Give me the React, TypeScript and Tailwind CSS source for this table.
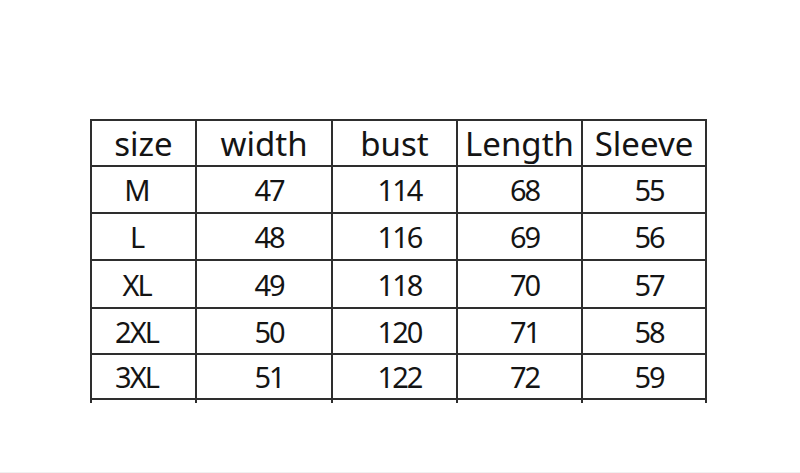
const headers = ['size', 'width', 'bust', 'Length', 'Sleeve'];

const rows = [
  ['M', '47', '114', '68', '55'],
  ['L', '48', '116', '69', '56'],
  ['XL', '49', '118', '70', '57'],
  ['2XL', '50', '120', '71', '58'],
  ['3XL', '51', '122', '72', '59'],
];

const rowHeights = ['h-[45px]', 'h-[45px]', 'h-[46px]', 'h-[44px]', 'h-[43px]'];

export default function App() {
  return (
    <div className="w-[800px] h-[473px] bg-white border-b border-[#f0f0f0] pt-[119px] pl-[90px] font-['Noto_Sans',sans-serif] text-[#141414]">
      <div className="inline-grid grid-cols-[103px_134px_123px_123px_122px] gap-[2px] bg-[#2e2e2e] p-[2px] pb-0">
        {headers.map((h) => (
          <div key={h} className="h-[44px] bg-white flex items-center justify-center text-[33px] leading-none">
            {h}
          </div>
        ))}
        {rows.map((r, i) =>
          r.map((v, j) => (
            <div
              key={`${i}-${j}`}
              className={`${rowHeights[i]} bg-white flex items-center justify-center text-[29px] leading-none tracking-[-2px] ${j === 0 ? 'pr-[14px]' : 'pl-[10px]'}`}
            >
              {v}
            </div>
          ))
        )}
        {headers.map((h) => (
          <div key={`end-${h}`} className="h-[3px] bg-white" />
        ))}
      </div>
    </div>
  );
}
